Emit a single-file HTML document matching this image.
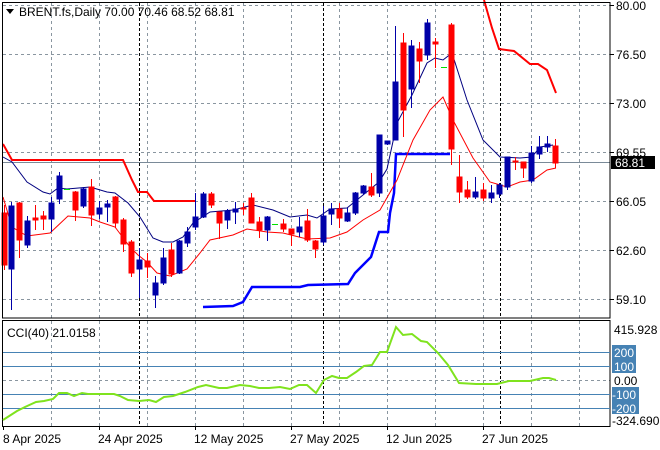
<!DOCTYPE html>
<html><head><meta charset="utf-8"><style>
html,body{margin:0;padding:0;background:#fff;}
svg{display:block;font-family:"Liberation Sans",sans-serif;}
</style></head><body>
<svg width="660" height="450" viewBox="0 0 660 450" xmlns="http://www.w3.org/2000/svg">
<rect width="660" height="450" fill="#fff"/>
<!-- grid main -->
<g stroke="#8a96a0" stroke-width="1" stroke-dasharray="3,3">
<path d="M3 5.5H610M3 54.5H610M3 103.5H610M3 152.5H610M3 201.5H610M3 250.5H610M3 299.5H610"/>
<path d="M51.5 3V318M99.5 3V318M147.5 3V318M195.5 3V318M243.5 3V318M291.5 3V318M339.5 3V318M387.5 3V318M435.5 3V318M483.5 3V318M531.5 3V318M579.5 3V318"/>
<path d="M51.5 321V426M99.5 321V426M147.5 321V426M195.5 321V426M243.5 321V426M291.5 321V426M339.5 321V426M387.5 321V426M435.5 321V426M483.5 321V426M531.5 321V426M579.5 321V426M3 380.5H610"/>
</g>
<g stroke="#000" stroke-width="1" stroke-dasharray="3,2">
<path d="M139.5 3V318M323.5 3V318M500.5 3V318M139.5 321V426M323.5 321V426M500.5 321V426"/>
</g>
<path d="M3 162.5H610" stroke="#7a8a98" stroke-width="1"/>
<!-- lines -->
<polyline fill="none" stroke="#ff0000" stroke-width="2" points="3,144 12,160 123,160 132,180 138,192 147,192 154,201 195,201"/>
<polyline fill="none" stroke="#ff0000" stroke-width="2" points="484,0 492,28 499,49 514,51 530,64 538,64 547,70 556,93"/>
<polyline fill="none" stroke="#0000ff" stroke-width="2.5" points="203,307 233,306 243,302 252,287 300,287 308,285 348,284 355,273 371,257 379,232 388,232 390,213 394,193 396,154 450,154"/>
<polyline fill="none" stroke="#000080" stroke-width="1" points="3,157 12,162 27,182 43,192 50,194 58,188 67,189 90,187 107,192 115,193 128,203 140,217 153,238 163,242 173,242 183,237 193,223 210,212 233,210 253,205 273,210 290,217 307,215 317,218 330,209 347,208 363,195 379,182 387,169 397,123 412,95 427,63 435,58 443,60 452,53 467,100 483,140 500,157 520,158 532,157 540,147 553,145"/>
<polyline fill="none" stroke="#ff0000" stroke-width="1" points="3,197 12,227 27,236 50,233 68,216 90,218 100,222 115,227 130,247 138,255 147,262 157,273 170,276 187,269 200,253 210,240 233,235 247,229 267,232 283,233 307,239 330,238 347,232 363,220 380,210 397,180 413,140 430,110 443,97 453,120 473,158 490,182 507,187 520,182 533,180 547,170 556,168"/>
<!-- red candles -->
<g fill="#ff0000" stroke="#ff0000" stroke-width="1">
<path d="M4.5 205V270M19.5 202V258M35.5 205V230M43.5 211V230M75.5 191V221M91.5 179V226M115.5 196V228M123.5 218V252M131.5 240V277M147.5 253V278M171.5 243V277M211.5 192V208M219.5 212V239M243.5 203V215M251.5 193V223M259.5 217V238M283.5 219V232M291.5 229V246M307.5 209V242M315.5 240V258M339.5 203V228M371.5 173V197M403.5 33V137M419.5 42V83M435.5 38V68M451.5 23V165M459.5 155V203M467.5 181V199M483.5 183V201M515.5 157V170M523.5 162V178M555.5 139V168" fill="none"/>
<rect x="2" y="213" width="5" height="52"/><rect x="17" y="203" width="5" height="37"/><rect x="33" y="218" width="5" height="2"/><rect x="41" y="216" width="5" height="3"/><rect x="73" y="192" width="5" height="18"/><rect x="89" y="187" width="5" height="28"/><rect x="113" y="197" width="5" height="26"/><rect x="121" y="220" width="5" height="24"/><rect x="129" y="242" width="5" height="31"/><rect x="145" y="261" width="5" height="6"/><rect x="169" y="250" width="5" height="24"/><rect x="209" y="194" width="5" height="11"/><rect x="217" y="212" width="5" height="11"/><rect x="241" y="208" width="5" height="1"/><rect x="249" y="198" width="5" height="25"/><rect x="257" y="222" width="5" height="8"/><rect x="281" y="224" width="5" height="5"/><rect x="289" y="229" width="5" height="5"/><rect x="305" y="221" width="5" height="19"/><rect x="313" y="241" width="5" height="8"/><rect x="337" y="209" width="5" height="9"/><rect x="369" y="187" width="5" height="8"/><rect x="401" y="43" width="5" height="67"/><rect x="417" y="49" width="5" height="12"/><rect x="433" y="42" width="5" height="2"/><rect x="449" y="25" width="5" height="124"/><rect x="457" y="177" width="5" height="15"/><rect x="465" y="190" width="5" height="7"/><rect x="481" y="190" width="5" height="8"/><rect x="513" y="161" width="5" height="1"/><rect x="521" y="162" width="5" height="6"/><rect x="553" y="146" width="5" height="17"/>
</g>
<!-- blue candles -->
<g fill="#0000a8" stroke="#0000a8" stroke-width="1">
<path d="M11.5 202V310M27.5 216V248M51.5 197V232M59.5 172V204M83.5 187V208M99.5 201V219M107.5 200V222M139.5 248V298M155.5 276V308M163.5 248V285M179.5 240V274M187.5 227V247M195.5 193V230M203.5 192V218M227.5 209V229M235.5 202V224M267.5 216V241M299.5 217V237M323.5 206V245M331.5 203V225M347.5 208V222M355.5 192V215M363.5 185V195M379.5 135V197M387.5 141V145M395.5 26V140M411.5 40V108M427.5 19V60M475.5 177V199M491.5 185V203M499.5 183V198M507.5 157V190M531.5 146V183M539.5 136V159M547.5 136V152" fill="none"/>
<rect x="9" y="206" width="5" height="63"/><rect x="25" y="221" width="5" height="24"/><rect x="49" y="203" width="5" height="16"/><rect x="57" y="176" width="5" height="23"/><rect x="81" y="189" width="5" height="17"/><rect x="97" y="208" width="5" height="6"/><rect x="105" y="204" width="5" height="3"/><rect x="137" y="260" width="5" height="9"/><rect x="153" y="283" width="5" height="12"/><rect x="161" y="258" width="5" height="25"/><rect x="177" y="241" width="5" height="32"/><rect x="185" y="232" width="5" height="11"/><rect x="193" y="217" width="5" height="10"/><rect x="201" y="194" width="5" height="23"/><rect x="225" y="211" width="5" height="9"/><rect x="233" y="209" width="5" height="3"/><rect x="265" y="217" width="5" height="13"/><rect x="297" y="227" width="5" height="5"/><rect x="321" y="216" width="5" height="26"/><rect x="329" y="209" width="5" height="5"/><rect x="345" y="213" width="5" height="8"/><rect x="353" y="193" width="5" height="20"/><rect x="361" y="186" width="5" height="7"/><rect x="377" y="135" width="5" height="58"/><rect x="385" y="141" width="5" height="3"/><rect x="393" y="82" width="5" height="58"/><rect x="409" y="46" width="5" height="43"/><rect x="425" y="23" width="5" height="32"/><rect x="473" y="192" width="5" height="5"/><rect x="489" y="193" width="5" height="5"/><rect x="497" y="185" width="5" height="9"/><rect x="505" y="157" width="5" height="30"/><rect x="529" y="153" width="5" height="28"/><rect x="537" y="147" width="5" height="7"/><rect x="545" y="144" width="5" height="3"/>
</g>
<path d="M64 189.5H70M272 224.5H278M441 67.5H447" stroke="#00e000" stroke-width="1"/>
<!-- frames -->
<rect x="2.5" y="2.5" width="607.5" height="315.5" fill="none" stroke="#000"/>
<rect x="2.5" y="320.5" width="607.5" height="106" fill="none" stroke="#000"/>
<!-- right axis labels -->
<g font-size="12" fill="#000">
<text x="616" y="10">80.00</text><text x="616" y="59">76.50</text><text x="616" y="108">73.00</text><text x="616" y="157">69.55</text><text x="616" y="206">66.05</text><text x="616" y="255">62.60</text><text x="616" y="304">59.10</text>
</g>
<rect x="611" y="156" width="44" height="13" fill="#000"/>
<text x="615" y="167" font-size="12" fill="#fff">68.81</text>
<g stroke="#000"><path d="M610 5.5h4M610 54.5h4M610 103.5h4M610 152.5h4M610 201.5h4M610 250.5h4M610 299.5h4"/></g>
<!-- title -->
<path d="M6 9h8l-4 5z" fill="#000"/>
<text x="19" y="16" font-size="12" fill="#000">BRENT.fs,Daily  70.00 70.46 68.52 68.81</text>
<!-- CCI -->
<g stroke="#4682b4" stroke-width="1"><path d="M3 352.5H610M3 366.5H610M3 394.5H610M3 408.5H610"/></g>
<polyline fill="none" stroke="#7fe31e" stroke-width="2" points="3,420 17,411 25,407 36,402 44,401 53,399 59,393 67,393 74,396 82,393 88,394 101,394 114,394 120,396 128,400 139,401 149,400 156,402 164,397 173,396 185,392 198,387 206,385 219,388 227,388 240,385 250,386 259,388 269,388 280,387 290,389 299,385 307,385 316,393 324,380 332,376 339,378 347,378 356,372 364,366 372,365 380,352 387,352 396,327 403,335 412,334 421,341 427,342 438,353 448,365 459,383 476,384 497,384 509,381 530,381 543,378 549,378 556,380"/>
<text x="7" y="337" font-size="12" fill="#000">CCI(40) 21.0158</text>
<rect x="612" y="345" width="24" height="28" fill="#4682b4"/>
<rect x="612" y="387" width="27" height="27" fill="#4682b4"/>
<g font-size="12">
<text x="614" y="334" fill="#000">415.928</text>
<text x="614" y="357" fill="#fff">200</text><text x="614" y="371" fill="#fff">100</text>
<text x="614" y="385" fill="#000">0.00</text>
<text x="612" y="399" fill="#fff">-100</text><text x="612" y="413" fill="#fff">-200</text>
<text x="612" y="425" fill="#000">-324.690</text>
</g>
<!-- date labels -->
<g font-size="12" fill="#000">
<text x="3" y="443">8 Apr 2025</text><text x="98" y="443">24 Apr 2025</text><text x="194" y="443">12 May 2025</text><text x="290" y="443">27 May 2025</text><text x="386" y="443">12 Jun 2025</text><text x="482" y="443">27 Jun 2025</text>
</g>
<g stroke="#000"><path d="M3.5 426v4M99.5 426v4M195.5 426v4M291.5 426v4M387.5 426v4M483.5 426v4"/></g>
</svg>
</body></html>
